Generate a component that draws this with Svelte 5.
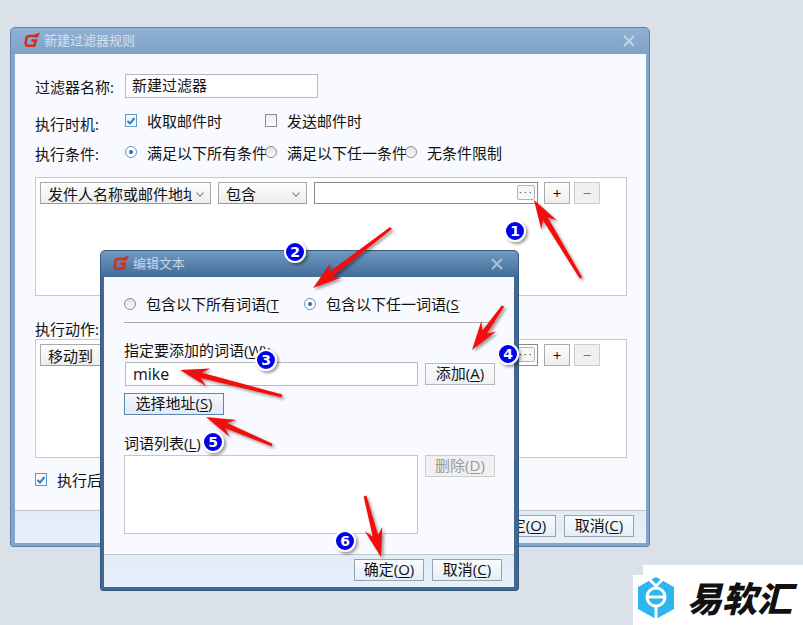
<script>
  // arrows run from the tail to the tip, badges sit next to them
  const arrows = [
    { tail: [581, 278], tip: [534, 200] },
    { tail: [391, 228], tip: [313, 288] },
    { tail: [282, 396], tip: [180, 370] },
    { tail: [503, 306], tip: [472, 350] },
    { tail: [272, 445], tip: [206, 417] },
    { tail: [365, 496], tip: [381, 557] }
  ];
  const badges = [
    { n: 1, x: 515, y: 231 },
    { n: 2, x: 295, y: 252 },
    { n: 3, x: 266, y: 360 },
    { n: 4, x: 508, y: 354 },
    { n: 5, x: 213, y: 442 },
    { n: 6, x: 345, y: 541 }
  ];

  function arrowPoints(a) {
    const dx = a.tip[0] - a.tail[0];
    const dy = a.tip[1] - a.tail[1];
    const len = Math.hypot(dx, dy);
    const ux = dx / len;
    const uy = dy / len;
    const at = (back, side) =>
      `${(a.tip[0] - ux * back - uy * side).toFixed(1)},${(a.tip[1] - uy * back + ux * side).toFixed(1)}`;
    return [
      at(len, -1.4), at(22, -2.8), at(29, -9), at(0, 0),
      at(29, 9), at(22, 2.8), at(len, 1.4)
    ].join(" ");
  }
</script>

{#snippet logo()}
  <svg class="logo" viewBox="0 0 16 16" width="16" height="16">
    <path d="M12 4 H5.6 Q2.8 4 2.4 6.4 L1.7 10.8 Q1.4 13.8 4.2 13.8 H10.2 L11.8 8.6 H7.4" fill="none" stroke="#d1301c" stroke-width="2.6" />
    <path d="M10 2.8 L16 0.5 L13.8 5.6 H10 Z" fill="#d1301c" />
  </svg>
{/snippet}

{#snippet close()}
  <svg class="close" viewBox="0 0 12 12" width="12" height="12">
    <path d="M1 1 L11 11 M11 1 L1 11" stroke="currentColor" stroke-width="2" />
  </svg>
{/snippet}

{#snippet check()}
  <span class="check">
    <svg viewBox="0 0 12 12" width="12" height="12">
      <path d="M2.5 6 L5 8.5 L9.5 3" fill="none" stroke="#3f7fb5" stroke-width="2" />
    </svg>
  </span>
{/snippet}

<div class="desk">
  <section class="win outer">
    <header class="title">
      {@render logo()}
      <span>新建过滤器规则</span>
      {@render close()}
    </header>
    <div class="content">
      <div class="row name-row">
        <span class="label">过滤器名称:</span>
        <div class="field name-field">新建过滤器</div>
      </div>
      <div class="row when-row">
        <span class="label">执行时机:</span>
        <span class="opt">{@render check()}收取邮件时</span>
        <span class="opt"><span class="box"></span>发送邮件时</span>
      </div>
      <div class="row cond-row">
        <span class="label">执行条件:</span>
        <span class="opt"><span class="radio"></span>满足以下所有条件</span>
        <span class="opt"><span class="radio off"></span>满足以下任一条件</span>
        <span class="opt"><span class="radio off"></span>无条件限制</span>
      </div>

      <div class="rule-box">
        <div class="rule">
          <div class="select s1"><span>发件人名称或邮件地址</span><i></i></div>
          <div class="select s2"><span>包含</span><i></i></div>
          <div class="rule-input"><button class="more">···</button></div>
          <button class="pm">+</button>
          <button class="pm off">−</button>
        </div>
      </div>

      <div class="action-label">执行动作:</div>
      <div class="rule-box">
        <div class="rule">
          <div class="select s1"><span>移动到</span><i></i></div>
          <div class="select s2"></div>
          <div class="rule-input"><button class="more">···</button></div>
          <button class="pm">+</button>
          <button class="pm off">−</button>
        </div>
      </div>

      <div class="after">{@render check()}执行后停止</div>
    </div>
    <footer class="foot">
      <button class="btn">确定(<u>O</u>)</button>
      <button class="btn">取消(<u>C</u>)</button>
    </footer>
  </section>

  <section class="win inner">
    <header class="title">
      {@render logo()}
      <span>编辑文本</span>
      {@render close()}
    </header>
    <div class="content">
      <div class="modes">
        <span class="mode m1"><span class="radio off"></span><span class="clip">包含以下所有词语(<u>T</u>)</span></span>
        <span class="mode m2"><span class="radio"></span><span class="clip">包含以下任一词语(<u>S</u>)</span></span>
      </div>
      <div class="sep"></div>
      <div class="word-label">指定要添加的词语(<u>W</u>):</div>
      <div class="pair">
        <div class="field word-input">mike</div>
        <button class="btn add up">添加(<u>A</u>)</button>
      </div>
      <button class="btn pick">选择地址(<u>S</u>)</button>
      <div class="list-label">词语列表(<u>L</u>)</div>
      <div class="pair top">
        <div class="list"></div>
        <button class="btn add disabled">删除(<u>D</u>)</button>
      </div>
    </div>
    <footer class="foot">
      <button class="btn">确定(<u>O</u>)</button>
      <button class="btn">取消(<u>C</u>)</button>
    </footer>
  </section>

  <svg class="marks" viewBox="0 0 803 625" width="803" height="625">
    <defs>
      <filter id="soft" x="-30%" y="-30%" width="160%" height="160%">
        <feDropShadow dx="2" dy="2" stdDeviation="1.5" flood-color="#000" flood-opacity="0.4" />
      </filter>
    </defs>
    {#each arrows as a}
      <polygon points={arrowPoints(a)} fill="#f40b0b" filter="url(#soft)" />
    {/each}
    {#each badges as b}
      <circle cx={b.x} cy={b.y} r="10" fill="#0000ee" stroke="#fff" stroke-width="2" filter="url(#soft)" />
      <text x={b.x} y={b.y + 5} text-anchor="middle" class="num">{b.n}</text>
    {/each}
  </svg>

  <div class="stamp">
    <svg viewBox="0 0 38 42" width="38" height="42">
      <path d="M19 0 L37 10 V32 L19 42 L1 32 V10 Z" fill="#2cb5ef" />
      <path d="M12 2 L19 9 L26 2" fill="none" stroke="#fff" stroke-width="3" />
      <circle cx="19" cy="20" r="9" fill="none" stroke="#fff" stroke-width="3" />
      <path d="M11 20 H28 M19 29 V42" stroke="#fff" stroke-width="3" fill="none" />
    </svg>
    <span>易软汇</span>
  </div>
</div>

<style>
  :global(body) {
    margin: 0;
    background: #dae1e8;
  }

  .desk {
    position: relative;
    width: 803px;
    height: 625px;
    overflow: hidden;
    background: #dae1e8;
    color: #111;
    font-family: "Open Sans", "Noto Sans CJK SC", sans-serif;
    font-size: 15px;
  }

  button {
    font: inherit;
    color: inherit;
    padding: 0;
  }

  u {
    text-underline-offset: 2px;
  }

  /* windows */
  .win {
    position: absolute;
    box-sizing: border-box;
    display: flex;
    flex-direction: column;
    border-radius: 5px 5px 3px 3px;
  }

  .outer {
    left: 10px;
    top: 27px;
    width: 640px;
    height: 520px;
    padding: 0 3px 3px 4px;
    border: 1px solid #5f83aa;
    background: linear-gradient(#90b1d4, #80a2c8 26px, #84a5ca 26px);
  }

  .inner {
    left: 100px;
    top: 250px;
    width: 419px;
    height: 341px;
    padding: 0 4px 3px 3px;
    border: 1px solid #35597f;
    background: linear-gradient(#7099c4, #436c98 26px, #3f6893 26px);
  }

  .title {
    display: flex;
    align-items: center;
    height: 26px;
    flex: none;
    box-sizing: border-box;
    padding: 0 0 3px 9px;
    font-size: 13px;
    color: #d5e0ec;
  }

  .inner .title {
    color: #c6d5e5;
  }

  .logo {
    margin-right: 4px;
  }

  .close {
    margin: 3px 11px 0 auto;
    color: #c3d3e4;
  }

  .inner .close {
    color: #a9c0d8;
  }

  .content {
    flex: 1;
    min-height: 0;
    padding: 0 19px 0 20px;
    background: #f9faff;
    overflow: hidden;
  }

  .foot {
    flex: none;
    box-sizing: border-box;
    display: flex;
    justify-content: flex-end;
    gap: 8px;
    height: 33px;
    padding: 4px 12px 0 0;
    border-top: 1px solid #c3c7cc;
    background: linear-gradient(#e1ecf6, #e7f1fb);
  }

  .btn {
    box-sizing: border-box;
    width: 70px;
    height: 22px;
    padding-bottom: 2px;
    line-height: 18px;
    border: 1px solid #9aa3ad;
    background: linear-gradient(#f9fbfd, #e4eef8);
    white-space: nowrap;
  }

  /* outer form */
  .row {
    display: flex;
    align-items: center;
    height: 24px;
  }

  .name-row {
    margin-top: 20px;
  }

  .when-row {
    margin-top: 10px;
  }

  .cond-row {
    margin-top: 8px;
  }

  .label {
    width: 90px;
    flex: none;
  }

  .when-row .label {
    padding-top: 6px;
  }

  .cond-row .label {
    padding-top: 3px;
  }

  .field {
    box-sizing: border-box;
    border: 1px solid #b5b9bd;
    background: #fff;
  }

  .name-field {
    width: 193px;
    height: 24px;
    line-height: 20px;
    padding-left: 6px;
  }

  .opt {
    display: flex;
    align-items: center;
    gap: 10px;
    width: 140px;
    flex: none;
    white-space: nowrap;
  }

  .check,
  .box {
    box-sizing: border-box;
    display: block;
    flex: none;
    width: 12px;
    height: 13px;
    border: 1px solid #5a9bd0;
    background: #f4f8fc;
  }

  .check svg {
    display: block;
    margin: 0 0 0 -1px;
  }

  .box {
    border-color: #8c8c8c;
    background: linear-gradient(#eee, #fbfbfb);
  }

  .radio {
    position: relative;
    box-sizing: border-box;
    display: block;
    flex: none;
    width: 12px;
    height: 12px;
    margin-top: -1px;
    border: 1px solid #5e9acb;
    border-radius: 50%;
    background: #fff;
  }

  .radio::after {
    content: "";
    position: absolute;
    left: 3px;
    top: 3px;
    width: 4px;
    height: 4px;
    border-radius: 50%;
    background: #2f6fa8;
  }

  .radio.off {
    border-color: #8a8f94;
    background: linear-gradient(#e2e2e2, #fafafa);
  }

  .radio.off::after {
    display: none;
  }

  .rule-box {
    box-sizing: border-box;
    height: 119px;
    margin-top: 13px;
    padding: 4px;
    width: 592px;
    border: 1px solid #c8c8c8;
    background: #fff;
  }

  .action-label {
    height: 20px;
    line-height: 20px;
    margin-top: 23px;
  }

  .action-label + .rule-box {
    margin-top: 0;
  }

  .rule {
    display: flex;
    height: 22px;
  }

  .select {
    box-sizing: border-box;
    position: relative;
    display: flex;
    align-items: center;
    height: 22px;
    padding-left: 7px;
    border: 1px solid #aaa;
    border-bottom-color: #999;
    background: linear-gradient(#fdfdfd, #ededed);
    white-space: nowrap;
  }

  .select span {
    display: block;
    overflow: hidden;
  }

  .select i {
    position: absolute;
    right: 7px;
    top: 7px;
    width: 5px;
    height: 5px;
    border: solid #777;
    border-width: 0 1.5px 1.5px 0;
    transform: rotate(45deg) scale(0.9);
  }

  .s1 {
    width: 171px;
  }

  .s1 span {
    width: 144px;
  }

  .s2 {
    width: 89px;
    margin-left: 7px;
  }

  .rule-input {
    box-sizing: border-box;
    display: flex;
    justify-content: flex-end;
    align-items: flex-start;
    width: 224px;
    height: 22px;
    margin-left: 7px;
    padding: 2px 2px 0 0;
    border: 1px solid #8a8a8a;
    background: #fff;
  }

  .more {
    box-sizing: border-box;
    width: 18px;
    height: 15px;
    line-height: 11px;
    font-family: "Liberation Sans", sans-serif;
    font-size: 10px;
    letter-spacing: 1.5px;
    color: #333;
    border: 1px solid #b4b4b4;
    border-radius: 2px;
    background: #f6f6f6;
  }

  .pm {
    box-sizing: border-box;
    width: 26px;
    height: 22px;
    margin-left: 6px;
    line-height: 18px;
    border: 1px solid #aaa;
    background: linear-gradient(#fdfdfd, #eee);
  }

  .pm.off {
    margin-left: 4px;
    border-color: #ccc;
    background: #f0f0f0;
    color: #777;
  }

  .after {
    display: flex;
    align-items: center;
    gap: 10px;
    height: 24px;
    margin-top: 9px;
    white-space: nowrap;
  }

  /* inner form */
  .modes {
    display: flex;
    height: 24px;
    margin-top: 15px;
  }

  .mode {
    display: flex;
    align-items: center;
    gap: 10px;
  }

  .m1 {
    width: 180px;
  }

  .clip {
    display: block;
    margin-top: -1px;
    overflow: hidden;
    white-space: nowrap;
  }

  .m1 .clip {
    width: 133px;
  }

  .m2 .clip {
    width: 134px;
  }

  .sep {
    width: 371px;
    height: 1px;
    margin-top: 6px;
    background: #aaa;
  }

  .word-label {
    height: 20px;
    line-height: 20px;
    margin-top: 17px;
    white-space: nowrap;
  }

  .pair {
    display: flex;
    gap: 7px;
    align-items: center;
    margin-top: 2px;
  }

  .pair.top {
    align-items: flex-start;
  }

  .word-input {
    box-sizing: border-box;
    width: 293px;
    height: 24px;
    line-height: 22px;
    padding-left: 7px;
    font-size: 16px;
    margin-left: 1px;
  }

  .add {
    border-color: #b4b8bc;
    background: linear-gradient(#fafbfc, #eef1f4);
  }

  .add.up {
    margin-top: -1px;
  }

  .disabled {
    color: #999;
    background: #f0f0f0;
    border-color: #ccc;
  }

  .pick {
    display: block;
    width: 100px;
    margin-top: 7px;
    border-color: #5d86ad;
    background: linear-gradient(#f4f8fc, #dfeaf5);
  }

  .list-label {
    height: 20px;
    line-height: 20px;
    margin-top: 18px;
  }

  .list {
    box-sizing: border-box;
    width: 294px;
    height: 79px;
    border: 1px solid #c6c6c6;
    background: #fff;
  }

  /* annotations */
  .marks {
    position: absolute;
    left: 0;
    top: 0;
    pointer-events: none;
  }

  .num {
    fill: #fff;
    font-family: "DejaVu Sans", sans-serif;
    font-size: 14px;
    font-weight: 700;
  }

  /* watermark */
  .stamp {
    position: absolute;
    right: 0;
    bottom: 0;
    box-sizing: border-box;
    display: flex;
    align-items: center;
    gap: 12px;
    width: 170px;
    height: 50px;
    padding-left: 4px;
    background: #fff;
  }

  .stamp::before {
    content: "";
    position: absolute;
    left: 10px;
    right: 0;
    top: -10px;
    height: 10px;
    background: #fff;
  }

  .stamp svg {
    margin-top: -5px;
  }

  .stamp span {
    margin-top: -2px;
    font-size: 35px;
    line-height: 40px;
    font-weight: 900;
    font-style: italic;
    color: #111;
    white-space: nowrap;
  }
</style>
